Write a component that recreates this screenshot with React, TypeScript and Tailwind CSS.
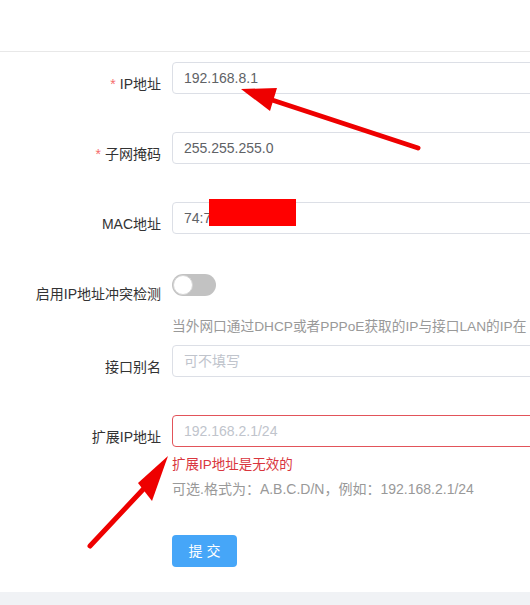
import React from 'react'

const font = { fontFamily: '"Liberation Sans", Arial, "Noto Sans CJK SC", sans-serif' }

function Label({ text, required, offset = 'mt-[12px]' }: { text: string; required?: boolean; offset?: string }) {
  return (
    <div className={`w-[172px] shrink-0 pr-[11px] text-right text-[14px] leading-[20px] text-[#333] ${offset}`}>
      {required && <span className="mr-[4px] text-[#f56c6c]">*</span>}
      {text}
    </div>
  )
}

function Input({ value, placeholder, error }: { value?: string; placeholder?: string; error?: boolean }) {
  return (
    <div
      className={`flex h-[32px] w-[420px] shrink-0 items-center rounded-[4px] border px-[11px] text-[14px] ${
        error ? 'border-[#e2545a]' : 'border-[#dcdfe6]'
      } ${value ? 'text-[#606266]' : 'text-[#c0c4cc]'}`}
    >
      {value ?? placeholder}
    </div>
  )
}

export default function App() {
  return (
    <div className="relative h-[605px] w-[530px] overflow-hidden bg-white" style={font}>
      {/* header */}
      <div className="h-[52px] border-b border-[#e8e8e8]" />

      <div className="mt-[10px] flex items-start">
        <Label text="IP地址" required />
        <Input value="192.168.8.1" />
      </div>

      <div className="mt-[38px] flex items-start">
        <Label text="子网掩码" required />
        <Input value="255.255.255.0" />
      </div>

      <div className="mt-[38px] flex items-start">
        <Label text="MAC地址" />
        <Input value="74:7" />
      </div>

      <div className="mt-[40px] flex items-start">
        <Label text="启用IP地址冲突检测" offset="mt-[10px]" />
        <div className="flex flex-col">
          <div className="relative h-[22px] w-[44px] rounded-full bg-[#c2c2c2]">
            <div className="absolute left-[1px] top-[1px] h-[20px] w-[20px] rounded-full border border-[#d6d6d6] bg-white" />
          </div>
          <div className="mt-[22px] whitespace-nowrap text-[13.7px] leading-[18px] text-[#999]">
            当外网口通过DHCP或者PPPoE获取的IP与接口LAN的IP在
          </div>
        </div>
      </div>

      <div className="mt-[9px] flex items-start">
        <Label text="接口别名" />
        <Input placeholder="可不填写" />
      </div>

      <div className="mt-[38px] flex items-start">
        <Label text="扩展IP地址" />
        <div className="flex flex-col">
          <Input placeholder="192.168.2.1/24" error />
          <div className="mt-[9px] text-[13.5px] leading-[18px] text-[#d9363e]">扩展IP地址是无效的</div>
          <div className="mt-[6px] text-[14px] leading-[18px] text-[#999]">
            可选.格式为：A.B.C.D/N，例如：192.168.2.1/24
          </div>
        </div>
      </div>

      <div className="ml-[172px] mt-[37px]">
        <button className="h-[32px] w-[65px] rounded-[4px] bg-[#46a6f8] text-[14px] text-white">
          提 交
        </button>
      </div>

      <div className="mt-[25px] h-[20px] bg-[#f0f2f5]" />

      {/* redaction block */}
      <div className="absolute left-[209px] top-[199px] h-[27px] w-[87px] bg-[#ff0000]" />

      {/* annotation arrows */}
      <svg className="pointer-events-none absolute left-0 top-0" width="530" height="605">
        <line x1="418" y1="148" x2="266" y2="98" stroke="#ee0000" strokeWidth="5" strokeLinecap="round" />
        <polygon points="241,89 277,88 270,111" fill="#ee0000" />
        <line x1="90" y1="546" x2="150" y2="482" stroke="#ee0000" strokeWidth="5" strokeLinecap="round" />
        <polygon points="168,456 138,483 152,501" fill="#ee0000" />
      </svg>
    </div>
  )
}
